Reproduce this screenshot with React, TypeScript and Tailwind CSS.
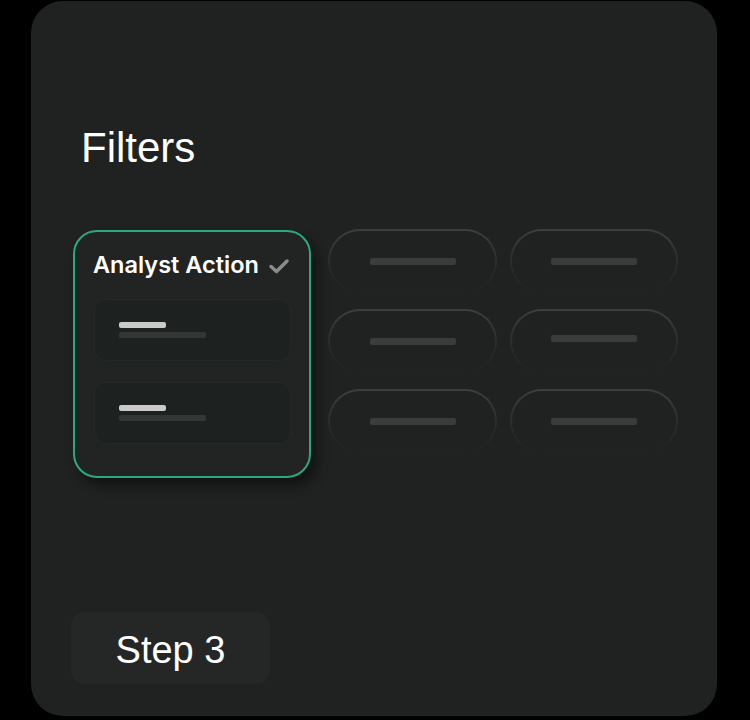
import React from 'react';

const PILL_ROWS = [
  [false, false],
  [false, true],
  [false, false],
];

const Pill: React.FC<{ raised?: boolean }> = ({ raised }) => (
  <div className="h-[64px] rounded-full bg-gradient-to-b from-[#3d3f3e] via-[#2b2d2c] to-[#202221] p-[2px]">
    <div className="h-full w-full rounded-full bg-[#202221] flex items-center justify-center">
      <div className={`h-[7px] w-[86px] rounded-[2px] bg-[#3a3c3b] ${raised ? 'mb-[6px]' : ''}`} />
    </div>
  </div>
);

const Item: React.FC = () => (
  <div className="h-[62px] rounded-[12px] bg-[#1d2221] border border-[#242827] pl-[24px] flex flex-col justify-center gap-[4px]">
    <div className="h-[6px] w-[47px] rounded-[2px] bg-[#c9cac9]" />
    <div className="h-[6px] w-[87px] rounded-[2px] bg-[#343736]" />
  </div>
);

export default function App() {
  return (
    <div className="w-[750px] h-[720px] bg-black pt-[1px] pl-[31px]">
      <div className="w-[686px] h-[715px] rounded-[32px] bg-[#202221] flex flex-col pl-[42px] pt-[122px]">
        <h1
          className="text-white text-[42px] leading-[50px] font-normal pl-[8px]"
          style={{ fontFamily: '"Liberation Sans", Arial, sans-serif' }}
        >
          Filters
        </h1>

        <div className="flex mt-[57px]">
          <div className="w-[238px] h-[248px] rounded-[24px] border-2 border-[#2ba882] bg-[#222423] shadow-[6px_8px_12px_rgba(0,0,0,0.45)] px-[18px] pt-[18px] flex flex-col">
            <div className="flex items-center gap-[9px] h-[30px]">
              <span
                className="text-white text-[23.5px] font-semibold"
                style={{ fontFamily: 'Inter, sans-serif' }}
              >
                Analyst Action
              </span>
              <svg width="22" height="18" viewBox="0 0 22 18" className="mt-[2px]">
                <path d="M3 9.5 L8.5 14.5 L19 4" fill="none" stroke="#8c8c8c" strokeWidth="3.5" strokeLinecap="round" strokeLinejoin="round" />
              </svg>
            </div>
            <div className="flex flex-col gap-[21px] mt-[19px] pl-[1px]">
              <Item />
              <Item />
            </div>
          </div>

          <div className="ml-[17px] -mt-[1px] flex flex-col gap-[16px]">
            {PILL_ROWS.map((row, i) => (
              <div key={i} className="flex gap-[13px]">
                <div className="w-[169px]"><Pill raised={row[0]} /></div>
                <div className="w-[168px]"><Pill raised={row[1]} /></div>
              </div>
            ))}
          </div>
        </div>

        <div className="mt-auto mb-[32px] -ml-[2px] w-[199px] h-[72px] rounded-[14px] bg-[#252726] flex items-center justify-center">
          <span
            className="text-white text-[38px] leading-none mt-[3px]"
            style={{ fontFamily: '"Liberation Sans", Arial, sans-serif' }}
          >
            Step 3
          </span>
        </div>
      </div>
    </div>
  );
}
